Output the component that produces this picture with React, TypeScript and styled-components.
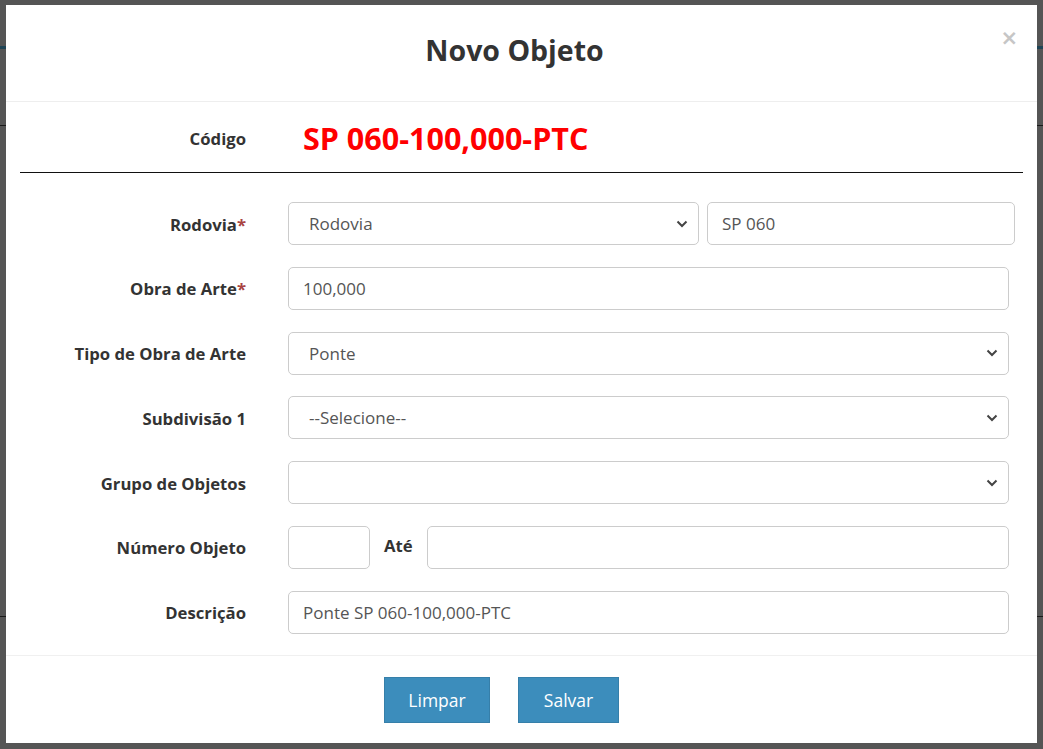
import React from "react";
import styled, { createGlobalStyle } from "styled-components";

const FONT = `"Open Sans", Lato, "Liberation Sans", sans-serif`;

const Global = createGlobalStyle`
  html, body { margin: 0; padding: 0; }
  body {
    width: 1043px;
    height: 749px;
    overflow: hidden;
    background: #555555;
    font-family: ${FONT};
  }
  * { box-sizing: border-box; }
`;

const Backdrop = styled.div`
  position: relative;
  width: 1043px;
  height: 749px;
  background: #555555;
  display: flex;
  flex-direction: column;
`;

const PageLine = styled.div<{ $top: number; $color: string; $h: number }>`
  margin-top: ${(p) => p.$top}px;
  height: ${(p) => p.$h}px;
  background: ${(p) => p.$color};
`;

const Modal = styled.div`
  position: absolute;
  left: 6px;
  top: 5px;
  width: 1031px;
  height: 738px;
  background: #ffffff;
  display: flex;
  flex-direction: column;
  color: #333333;
`;

const Header = styled.div`
  position: relative;
  height: 97px;
  border-bottom: 1px solid #eeeeee;
  display: flex;
  align-items: center;
  justify-content: center;
`;

const Title = styled.h4`
  margin: 0;
  font-size: 28.5px;
  font-weight: 700;
  color: #333333;
  padding-right: 14px;
  padding-bottom: 6px;
`;

const Close = styled.button`
  position: absolute;
  right: 19px;
  top: 23px;
  border: none;
  background: transparent;
  color: #c6c6c6;
  font-size: 21px;
  font-weight: 700;
  line-height: 20px;
  padding: 0;
  cursor: pointer;
  font-family: "DejaVu Sans", sans-serif;
`;

const Body = styled.div`
  flex: 1;
  display: flex;
  flex-direction: column;
`;

const CodeRow = styled.div`
  display: flex;
  align-items: center;
  height: 70px;
  padding-top: 1px;
`;

const LabelCell = styled.label`
  width: 240px;
  flex: 0 0 240px;
  text-align: right;
  font-size: 16.7px;
  font-weight: 700;
  color: #333333;
  padding-top: 1px;
`;

const Required = styled.span`
  color: #a94442;
`;

const CodeValue = styled.div`
  margin-left: 57px;
  font-size: 30.5px;
  font-weight: 700;
  color: #ff0000;
`;

const Rule = styled.hr`
  margin: 0 14px;
  border: none;
  border-top: 1px solid #111111;
`;

const Form = styled.div`
  display: flex;
  flex-direction: column;
  gap: 21.8px;
  padding: 29px 28px 21px 0;
`;

const Row = styled.div`
  display: flex;
  align-items: center;
  height: 43px;
`;

const Controls = styled.div<{ $over?: number }>`
  flex: 1;
  display: flex;
  align-items: center;
  gap: 8px;
  margin-left: 42px;
  margin-right: ${(p) => -(p.$over || 0)}px;
`;

const SelectBox = styled.div<{ $w?: number }>`
  position: relative;
  height: 43px;
  ${(p) => (p.$w ? `width: ${p.$w}px; flex: 0 0 ${p.$w}px;` : "flex: 1;")}
  border: 1px solid #cccccc;
  border-radius: 5px;
  background: #ffffff;
  display: flex;
  align-items: center;
  padding-left: 20px;
  font-size: 17px;
  color: #555555;
`;

const Chevron = styled.svg`
  position: absolute;
  right: 10px;
  top: 50%;
  margin-top: -4px;
`;

const TextBox = styled.div<{ $w?: number }>`
  height: 43px;
  ${(p) => (p.$w ? `width: ${p.$w}px; flex: 0 0 ${p.$w}px;` : "flex: 1;")}
  border: 1px solid #cccccc;
  border-radius: 5px;
  background: #ffffff;
  display: flex;
  align-items: center;
  padding-left: 14px;
  font-size: 17px;
  color: #555555;
`;

const InlineLabel = styled.span`
  font-size: 16.7px;
  font-weight: 700;
  color: #333333;
  margin: -4px 6px 0 6px;
`;

const Footer = styled.div`
  border-top: 1px solid #f0f0f0;
  display: flex;
  gap: 28px;
  padding: 21px 0 0 378px;
  height: 87px;
`;

const Button = styled.button<{ $w: number }>`
  width: ${(p) => p.$w}px;
  height: 46px;
  background: #3c8dbc;
  border: 1px solid #367fa9;
  color: #ffffff;
  font-size: 17.5px;
  font-family: ${FONT};
  padding: 0;
  cursor: pointer;
`;

const ChevronIcon = () => (
  <Chevron width="12" height="8" viewBox="0 0 12 8">
    <path d="M1.5 1.5 L6 6 L10.5 1.5" fill="none" stroke="#444" strokeWidth="2" />
  </Chevron>
);

const Select = ({ value, w }: { value: string; w?: number }) => (
  <SelectBox $w={w}>
    {value}
    <ChevronIcon />
  </SelectBox>
);

export default function App() {
  return (
    <>
      <Global />
      <Backdrop>
        <PageLine $top={46} $h={3} $color="#1f4455" />
        <PageLine $top={76} $h={1} $color="#1a1a1a" />
        <PageLine $top={490} $h={1} $color="#1a1a1a" />
        <Modal>
          <Header>
            <Title>Novo Objeto</Title>
            <Close aria-label="Fechar">×</Close>
          </Header>
          <Body>
            <CodeRow>
              <LabelCell>Código</LabelCell>
              <CodeValue>SP 060-100,000-PTC</CodeValue>
            </CodeRow>
            <Rule />
            <Form>
              <Row>
                <LabelCell>
                  Rodovia<Required>*</Required>
                </LabelCell>
                <Controls $over={6}>
                  <Select value="Rodovia" w={411} />
                  <TextBox>SP 060</TextBox>
                </Controls>
              </Row>
              <Row>
                <LabelCell>
                  Obra de Arte<Required>*</Required>
                </LabelCell>
                <Controls>
                  <TextBox>100,000</TextBox>
                </Controls>
              </Row>
              <Row>
                <LabelCell>Tipo de Obra de Arte</LabelCell>
                <Controls>
                  <Select value="Ponte" />
                </Controls>
              </Row>
              <Row>
                <LabelCell>Subdivisão 1</LabelCell>
                <Controls>
                  <Select value="--Selecione--" />
                </Controls>
              </Row>
              <Row>
                <LabelCell>Grupo de Objetos</LabelCell>
                <Controls>
                  <Select value="" />
                </Controls>
              </Row>
              <Row>
                <LabelCell>Número Objeto</LabelCell>
                <Controls>
                  <TextBox $w={82} />
                  <InlineLabel>Até</InlineLabel>
                  <TextBox />
                </Controls>
              </Row>
              <Row>
                <LabelCell>Descrição</LabelCell>
                <Controls>
                  <TextBox>Ponte SP 060-100,000-PTC</TextBox>
                </Controls>
              </Row>
            </Form>
            <Footer>
              <Button $w={106}>Limpar</Button>
              <Button $w={101}>Salvar</Button>
            </Footer>
          </Body>
        </Modal>
      </Backdrop>
    </>
  );
}
